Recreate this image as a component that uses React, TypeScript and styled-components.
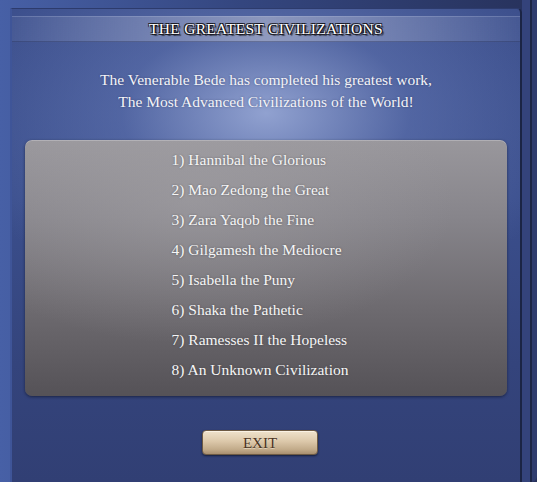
import React from 'react';
import styled, { createGlobalStyle } from 'styled-components';

const GlobalStyle = createGlobalStyle`
  html, body {
    margin: 0;
    padding: 0;
    background: #2b3766;
  }
  body {
    font-family: 'Liberation Serif', 'DejaVu Serif', serif;
  }
`;

const rankings = [
  'Hannibal the Glorious',
  'Mao Zedong the Great',
  'Zara Yaqob the Fine',
  'Gilgamesh the Mediocre',
  'Isabella the Puny',
  'Shaka the Pathetic',
  'Ramesses II the Hopeless',
  'An Unknown Civilization',
];

const App: React.FC = (): JSX.Element => {
  return (
    <>
      <GlobalStyle />
      <StFrame>
        <StWindow>
          <StTitleBar>
            <h1>THE GREATEST CIVILIZATIONS</h1>
          </StTitleBar>
          <StMessage>
            The Venerable Bede has completed his greatest work,
            <br />
            The Most Advanced Civilizations of the World!
          </StMessage>
          <StListPanel>
            <ol>
              {rankings.map((name, index) => (
                <li key={index}>
                  {index + 1}) {name}
                </li>
              ))}
            </ol>
          </StListPanel>
          <StFooter>
            <StExitButton>EXIT</StExitButton>
          </StFooter>
        </StWindow>
        <StRail />
      </StFrame>
    </>
  );
};

export default App;

const StFrame = styled.div`
  display: flex;
  width: 537px;
  height: 482px;
  box-sizing: border-box;
  padding: 8px 0 0 10px;
  background: linear-gradient(90deg, #4760a6 0%, #34467f 45%, #27325c 100%);
  overflow: hidden;
`;

const StWindow = styled.div`
  display: flex;
  flex-direction: column;
  width: 512px;
  height: 474px;
  box-sizing: border-box;
  border-left: 2px solid #3f5598;
  border-right: 2px solid #1b2444;
  border-top: 1px solid #2d3b6c;
  border-radius: 0 5px 0 0;
  background:
    radial-gradient(ellipse 320px 200px at 50% 22%, rgba(160, 176, 220, 0.85) 0%, rgba(110, 130, 190, 0.45) 45%, rgba(70, 90, 150, 0) 100%),
    linear-gradient(180deg, #3a4d8a 0%, #3b4f8d 40%, #34447c 75%, #313f74 100%);
`;

const StTitleBar = styled.div`
  display: flex;
  justify-content: center;
  align-items: center;
  height: 24px;
  margin-top: 7px;
  background: linear-gradient(
    90deg,
    rgba(120, 135, 180, 0.15) 0%,
    rgba(150, 160, 195, 0.55) 30%,
    rgba(165, 172, 200, 0.7) 50%,
    rgba(150, 160, 195, 0.55) 70%,
    rgba(120, 135, 180, 0.15) 100%
  );
  border-top: 1px solid rgba(190, 200, 230, 0.25);
  border-bottom: 1px solid rgba(40, 50, 90, 0.4);

  h1 {
    margin: 0;
    font-size: 15.5px;
    font-weight: normal;
    letter-spacing: 0.3px;
    color: #ffffff;
    text-shadow:
      1px 1px 0 #1a1a24,
      -1px 1px 0 #1a1a24,
      1px -1px 0 #1a1a24,
      -1px -1px 0 #1a1a24,
      2px 2px 1px rgba(0, 0, 0, 0.6);
  }
`;

const StMessage = styled.p`
  margin: 27px 0 0 0;
  text-align: center;
  font-size: 15.5px;
  line-height: 22px;
  color: #f4f4f8;
  text-shadow: 0 0 2px rgba(30, 40, 80, 0.5);
`;

const StListPanel = styled.div`
  margin: 27px 13px 0 13px;
  height: 256px;
  box-sizing: border-box;
  padding-top: 5px;
  display: flex;
  justify-content: center;
  border-radius: 7px;
  background:
    radial-gradient(ellipse 260px 140px at 35% 25%, rgba(170, 168, 172, 0.45) 0%, rgba(150, 148, 152, 0) 100%),
    linear-gradient(180deg, #99979c 0%, #87858b 30%, #6e6b70 65%, #555257 100%);
  box-shadow:
    0 1px 3px rgba(10, 15, 35, 0.6),
    inset 0 1px 0 rgba(220, 220, 225, 0.35);

  ol {
    list-style: none;
    margin: 0;
    padding: 0 12px 0 0;
  }

  li {
    height: 30px;
    line-height: 30px;
    font-size: 15.5px;
    color: #f6f6f6;
    white-space: nowrap;
    text-shadow: 0 0 2px rgba(40, 40, 45, 0.5);
  }
`;

const StFooter = styled.div`
  display: flex;
  justify-content: center;
  padding-right: 12px;
  margin-top: 34px;
`;

const StExitButton = styled.button`
  width: 116px;
  height: 25px;
  padding: 2px 0 0 0;
  border: 1px solid #6d5a44;
  border-radius: 4px;
  background: linear-gradient(180deg, #efe2cc 0%, #dcc8aa 45%, #c2ab8a 80%, #a88f70 100%);
  box-shadow:
    0 1px 2px rgba(10, 15, 35, 0.7),
    inset 0 1px 0 rgba(255, 250, 240, 0.7);
  font-family: 'Liberation Serif', 'DejaVu Serif', serif;
  font-size: 15px;
  color: #4a3322;
  text-shadow: 0 1px 0 rgba(255, 245, 230, 0.5);
  cursor: pointer;
`;

const StRail = styled.div`
  width: 15px;
  margin-top: -8px;
  background: linear-gradient(
    90deg,
    #34437b 0px,
    #34437b 8px,
    #1c2545 8px,
    #1c2545 10px,
    #2f3c6e 10px
  );
  border-radius: 0 0 6px 0;
`;
